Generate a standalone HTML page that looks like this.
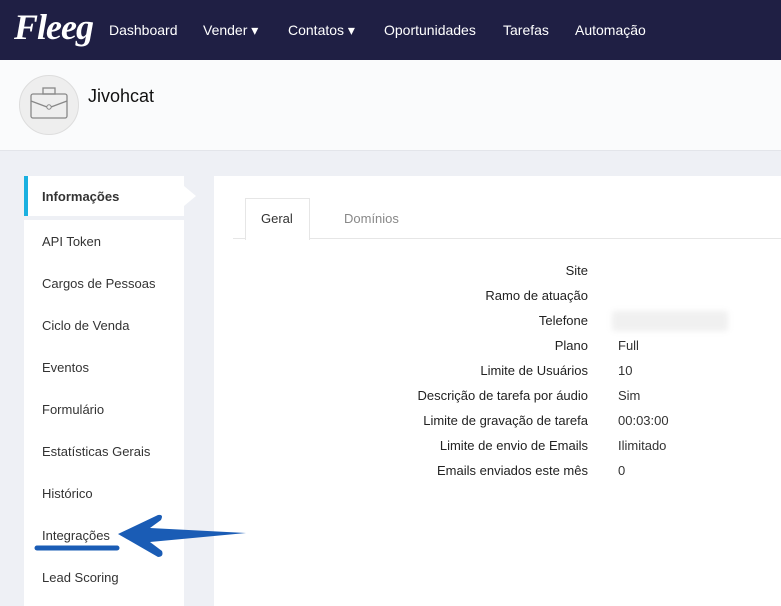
<html><head><style>
body{margin:0;width:781px;height:604px;overflow:hidden;background:#eef0f5;font-family:"Liberation Sans",sans-serif;position:relative}
.nav{position:absolute;left:0;top:0;width:781px;height:60px;background:#1f1f44}
.nav a{position:absolute;top:22px;color:#fff;font-size:14px}
.logo{position:absolute;left:14px;top:6px;color:#fff;font:italic bold 36px "Liberation Serif",serif;letter-spacing:-1px}
.hdr{position:absolute;left:0;top:60px;width:781px;height:90px;background:#fafbfc;border-bottom:1px solid #e3e5ea}
.av{position:absolute;left:19px;top:15px;width:58px;height:58px;border-radius:50%;background:#eeeeee;border:1px solid #ddd}
.side{position:absolute;left:24px;top:176px;width:160px;height:430px;background:#fff}
.si{position:absolute;left:18px;font-size:13px;color:#333}
.act{position:absolute;left:0;top:0;width:160px;height:40px;background:#fff;border-bottom:4px solid #eef0f5}
.panel{position:absolute;left:214px;top:176px;width:567px;height:430px;background:#fff}
.lab{position:absolute;right:193px;font-size:13px;color:#222;text-align:right}
.val{position:absolute;left:618px;font-size:13px;color:#333}
</style></head><body>
<div class="nav"><div class="logo">Fleeg</div>
<a style="left:109px">Dashboard</a><a style="left:203px">Vender ▾</a><a style="left:288px">Contatos ▾</a><a style="left:384px">Oportunidades</a><a style="left:503px">Tarefas</a><a style="left:575px">Automação</a></div>
<div class="hdr"><div class="av"><svg width="58" height="58" viewBox="0 0 58 58"><rect x="11" y="18" width="36" height="24" rx="2" fill="none" stroke="#888" stroke-width="1.3"/><rect x="23" y="12" width="12" height="6" fill="none" stroke="#888" stroke-width="1.3"/><path d="M11 25 L27 31 M31 31 L47 25" stroke="#888" stroke-width="1.3"/><circle cx="29" cy="31" r="2.2" fill="none" stroke="#888"/></svg></div>
<div style="position:absolute;left:88px;top:26px;font-size:18px;color:#111">Jivohcat</div></div>
<div class="side">
<div class="act"><div style="position:absolute;left:0;top:0;width:4px;height:40px;background:#1ab0e0"></div><div style="position:absolute;left:18px;top:13px;font-size:13px;font-weight:bold;color:#333">Informações</div></div>
<div style="position:absolute;left:160px;top:10px;width:0;height:0;border-top:10px solid transparent;border-bottom:10px solid transparent;border-left:12px solid #fff"></div>
<div class="si" style="top:58px">API Token</div><div class="si" style="top:100px">Cargos de Pessoas</div><div class="si" style="top:142px">Ciclo de Venda</div><div class="si" style="top:184px">Eventos</div><div class="si" style="top:226px">Formulário</div><div class="si" style="top:268px">Estatísticas Gerais</div><div class="si" style="top:310px">Histórico</div><div class="si" style="top:352px">Integrações</div><div class="si" style="top:394px">Lead Scoring</div>
</div>
<div class="panel">
<div style="position:absolute;left:19px;top:62px;width:548px;height:1px;background:#e6e6e6"></div>
<div style="position:absolute;left:31px;top:22px;width:63px;height:41px;background:#fff;border:1px solid #e6e6e6;border-bottom:none"></div>
<div style="position:absolute;left:47px;top:35px;font-size:13px;color:#333">Geral</div>
<div style="position:absolute;left:130px;top:35px;font-size:13px;color:#888">Domínios</div>
</div>
<div class="lab" style="top:263px">Site</div><div class="lab" style="top:288px">Ramo de atuação</div><div class="lab" style="top:313px">Telefone</div><div class="lab" style="top:338px">Plano</div><div class="lab" style="top:363px">Limite de Usuários</div><div class="lab" style="top:388px">Descrição de tarefa por áudio</div><div class="lab" style="top:413px">Limite de gravação de tarefa</div><div class="lab" style="top:438px">Limite de envio de Emails</div><div class="lab" style="top:463px">Emails enviados este mês</div>
<div style="position:absolute;left:612px;top:311px;width:116px;height:20px;background:#f0f0f0;filter:blur(3px)"></div>
<div class="val" style="top:338px">Full</div><div class="val" style="top:363px">10</div><div class="val" style="top:388px">Sim</div><div class="val" style="top:413px">00:03:00</div><div class="val" style="top:438px">Ilimitado</div><div class="val" style="top:463px">0</div>
<svg style="position:absolute;left:0;top:0" width="781" height="604"><path d="M37 548 L117 548" stroke="#1a5cb5" stroke-width="5" stroke-linecap="round"/><path d="M118 534 L158 515 Q164 514 161 520 L150 528 L246 533 L150 542 L162 551 Q164 557 158 557 Z" fill="#1a5cb5"/></svg>
</body></html>
